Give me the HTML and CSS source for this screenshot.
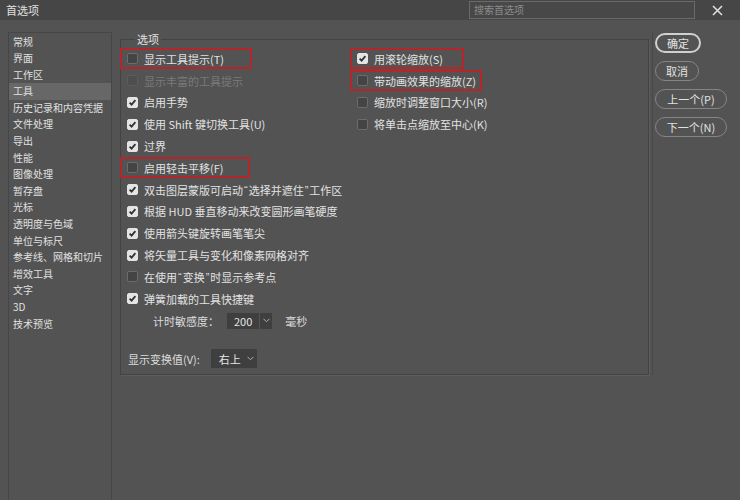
FILE: index.html
```html
<!DOCTYPE html>
<html lang="zh-CN">
<head>
    <meta charset="UTF-8">
    <title>首选项</title>
    <link rel="stylesheet" href="styles.css">
</head>
<body>

<!-- Barre de titre -->
<div class="titlebar">
    <span class="title">首选项</span>
    <div class="search">搜索首选项</div>
    <span class="close">
        <svg width="11" height="11" viewBox="0 0 11 11"><path d="M1 1 L10 10 M10 1 L1 10" stroke="#e2e2e2" stroke-width="1.5" fill="none"/></svg>
    </span>
</div>

<div class="window">
    <ul class="sidebar">
        <li>常规</li>
        <li>界面</li>
        <li>工作区</li>
        <li class="active">工具</li>
        <li>历史记录和内容凭据</li>
        <li>文件处理</li>
        <li>导出</li>
        <li>性能</li>
        <li>图像处理</li>
        <li>暂存盘</li>
        <li>光标</li>
        <li>透明度与色域</li>
        <li>单位与标尺</li>
        <li>参考线、网格和切片</li>
        <li>增效工具</li>
        <li>文字</li>
        <li>3D</li>
        <li>技术预览</li>
    </ul>

    <div class="panel">
        <fieldset class="group">
            <legend>选项</legend>
            <div class="columns">
                <div class="col col-left">
                    <div class="row"><span class="box"></span>显示工具提示(T)<span class="hl hl-t"></span></div>
                    <div class="row dim"><span class="box"></span>显示丰富的工具提示</div>
                    <div class="row"><span class="box on"></span>启用手势</div>
                    <div class="row"><span class="box on"></span>使用 Shift 键切换工具(U)</div>
                    <div class="row"><span class="box on"></span>过界</div>
                    <div class="row"><span class="box"></span>启用轻击平移(F)<span class="hl hl-f"></span></div>
                    <div class="row"><span class="box on"></span>双击图层蒙版可启动<span class="q">“</span>选择并遮住<span class="q">”</span>工作区</div>
                    <div class="row"><span class="box on"></span>根据 HUD 垂直移动来改变圆形画笔硬度</div>
                    <div class="row"><span class="box on"></span>使用箭头键旋转画笔笔尖</div>
                    <div class="row"><span class="box on"></span>将矢量工具与变化和像素网格对齐</div>
                    <div class="row"><span class="box"></span>在使用<span class="q">“</span>变换<span class="q">”</span>时显示参考点</div>
                    <div class="row"><span class="box on"></span>弹簧加载的工具快捷键</div>
                </div>
                <div class="col">
                    <div class="row"><span class="box on"></span>用滚轮缩放(S)<span class="hl hl-s"></span></div>
                    <div class="row"><span class="box"></span>带动画效果的缩放(Z)<span class="hl hl-z"></span></div>
                    <div class="row"><span class="box"></span>缩放时调整窗口大小(R)</div>
                    <div class="row"><span class="box"></span>将单击点缩放至中心(K)</div>
                </div>
            </div>

            <div class="field timer">
                <span>计时敏感度：</span>
                <span class="select select-split">200<span class="arrow"><svg width="7" height="5" viewBox="0 0 7 5"><path d="M0.5 0.8 L3.5 3.8 L6.5 0.8" stroke="#b0b0b0" stroke-width="1" fill="none"/></svg></span></span>
                <span class="unit">毫秒</span>
            </div>

            <div class="field transform">
                <span>显示变换值(V):</span>
                <span class="select">右上<span class="arrow"><svg width="7" height="5" viewBox="0 0 7 5"><path d="M0.5 0.8 L3.5 3.8 L6.5 0.8" stroke="#b0b0b0" stroke-width="1" fill="none"/></svg></span></span>
            </div>
        </fieldset>
    </div>

    <div class="buttons">
        <button class="btn default">确定</button>
        <button class="btn">取消</button>
        <button class="btn wide">上一个(P)</button>
        <button class="btn wide">下一个(N)</button>
    </div>
</div>

</body>
</html>
```

FILE: styles.css
```css
body {
    margin: 0;
    padding: 0;
    background: #535353;
    color: #dcdcdc;
    font-family: "Noto Sans CJK SC", "Liberation Sans", sans-serif;
    font-size: 11px;
    overflow: hidden;
    height: 500px;
}

/* Barre de titre */
.titlebar {
    height: 20px;
    background: #464646;
    display: flex;
    align-items: center;
}

.title {
    margin-left: 6px;
    font-size: 11px;
    color: #e0e0e0;
}

.search {
    margin-left: auto;
    width: 220px;
    height: 16px;
    line-height: 16px;
    padding-left: 4px;
    border: 1px solid #6a6a6a;
    background: #484848;
    color: #8c8c8c;
    font-size: 10px;
}

.close {
    width: 45px;
    display: flex;
    justify-content: center;
}

.close svg {
    display: block;
}

.window {
    display: flex;
    align-items: flex-start;
    padding: 12px 0 0 8px;
}

/* Liste de gauche */
.sidebar {
    list-style: none;
    margin: 0;
    padding: 0;
    width: 102px;
    height: 480px;
    border: 1px solid #464646;
    font-size: 10px;
}

.sidebar li {
    height: 16.6px;
    line-height: 16.6px;
    padding-left: 4px;
    color: #e0e0e0;
    white-space: nowrap;
}

.sidebar li:first-child {
    margin-top: 0.5px;
}

.sidebar li.active {
    background: #676767;
}

/* Panneau central */
.panel {
    margin-left: 6px;
    margin-top: -1px;
    padding: 0 3px 0 2px;
    width: 529px;
    border-right: 1px solid #484848;
}

.group {
    margin: 0;
    padding: 1px 0 5px 6px;
    border: 1px solid #434343;
    box-shadow: 1px 1px 0 #5c5c5c;
    min-width: 0;
}

.group legend {
    margin-left: 8px;
    padding: 0 2px;
    line-height: 16px;
    color: #e0e0e0;
}

.columns {
    display: flex;
}

.col-left {
    width: 230px;
}

.row {
    position: relative;
    height: 21.8px;
    display: flex;
    align-items: center;
    white-space: nowrap;
    color: #e2e2e2;
}

.row.dim {
    color: #7a7a7a;
}

.q {
    font-family: "Liberation Sans", sans-serif;
    margin: 0 1px;
}

.box {
    width: 9px;
    height: 9px;
    margin-right: 6px;
    border: 1px solid #6c6c6c;
    border-radius: 2px;
    background: #444;
    flex-shrink: 0;
}

.dim .box {
    border-color: #5c5c5c;
    background: #4e4e4e;
}

.box.on {
    border-color: #e4e4e4;
    background: #e4e4e4 url("data:image/svg+xml;utf8,<svg xmlns='http://www.w3.org/2000/svg' width='9' height='9' viewBox='0 0 9 9'><path d='M1.6 4.6 L3.6 6.6 L7.4 2.2' stroke='%23333' stroke-width='1.8' fill='none'/></svg>") no-repeat center;
}

/* Cadres rouges */
.hl {
    position: absolute;
    top: 0;
    bottom: 1px;
    left: -7px;
    border: 2px solid #b3262c;
}

.hl-t { width: 128px; }
.hl-f { width: 126px; }
.hl-s { width: 110px; }
.hl-z { width: 128px; }

/* Champs */
.field {
    display: flex;
    align-items: center;
    white-space: nowrap;
}

.timer {
    height: 22px;
    margin-left: 26px;
}

.transform {
    margin-top: 17px;
    height: 20px;
    margin-left: 1px;
}

.select {
    display: inline-flex;
    align-items: center;
    height: 18px;
    background: #3f3f3f;
    color: #e6e6e6;
    padding-left: 7px;
}

.timer .select {
    margin-left: 8px;
    height: 16px;
}

.transform .select {
    margin-left: 11px;
    height: 19px;
    padding-left: 8px;
}

.select .arrow {
    display: flex;
    align-items: center;
    justify-content: center;
    width: 12px;
    margin-left: 4px;
    height: 100%;
}

.select-split .arrow {
    border-left: 1px solid #555;
    margin-left: 7px;
}

.unit {
    margin-left: 13px;
}

/* Boutons */
.buttons {
    display: flex;
    flex-direction: column;
    align-items: flex-start;
    gap: 8px;
    margin-left: 2px;
    margin-top: 1px;
}

.btn {
    height: 20px;
    padding: 0 10px;
    border: 1px solid #858585;
    border-radius: 10px;
    background: transparent;
    color: #e2e2e2;
    font-family: "Noto Sans CJK SC", "Liberation Sans", sans-serif;
    font-size: 11px;
    line-height: 16px;
}

.btn.default {
    border: 2px solid #d0d0d0;
    padding: 0 10px;
}

.btn.wide {
    width: 72px;
}
```
